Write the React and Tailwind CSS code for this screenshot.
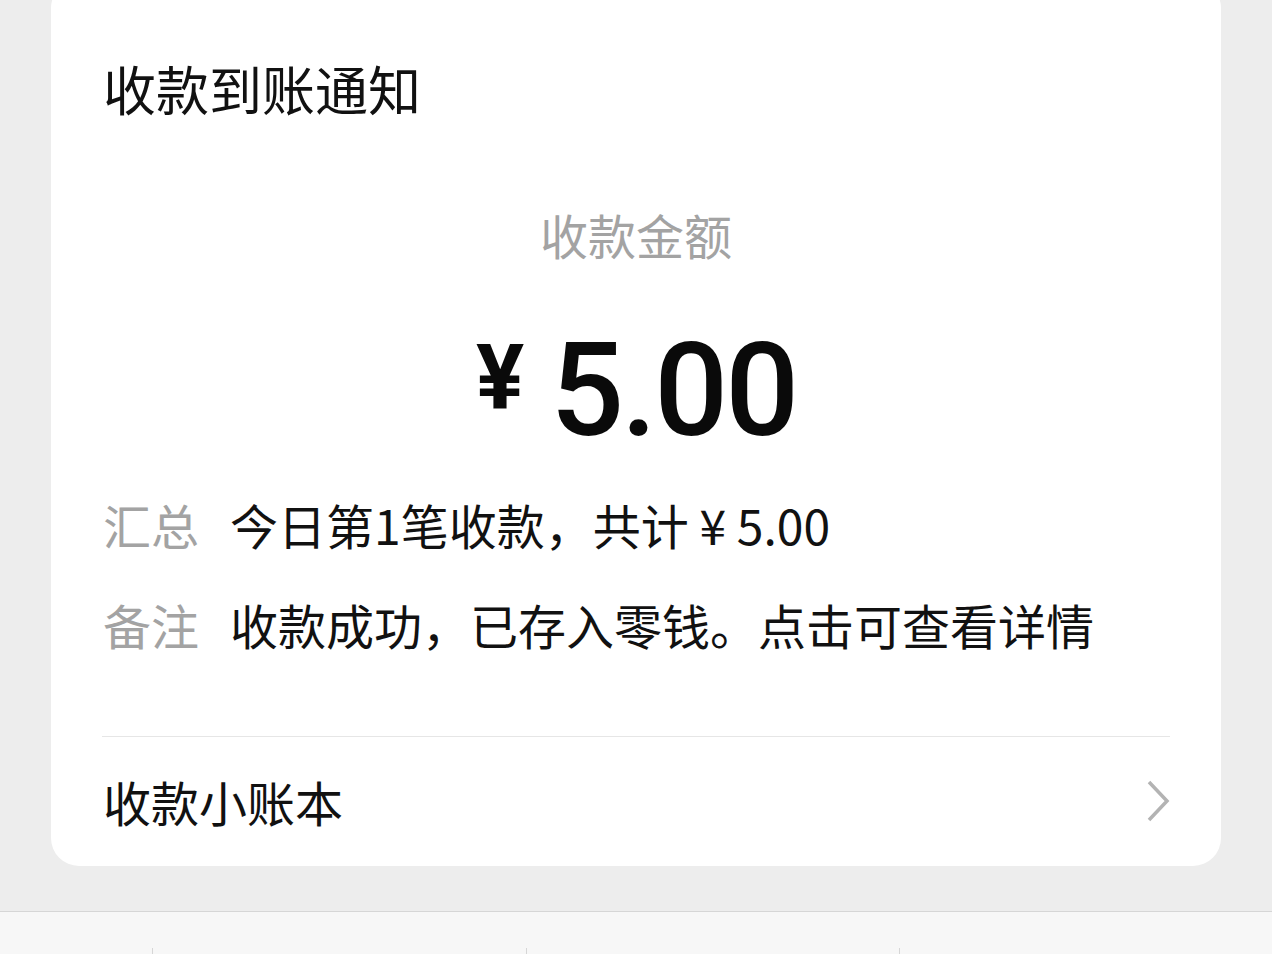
export default function App() {
  const cjk = { fontFamily: '"Noto Sans CJK SC", "Noto Sans", sans-serif' };
  return (
    <div className="w-[1272px] h-[954px] overflow-hidden bg-[#ededed] flex flex-col" style={cjk}>
      <div className="mx-[51px] w-[1170px] -mt-[20px] bg-white rounded-[28px] px-[52px] pt-[82px] pb-[41px] flex flex-col">
        <div className="text-[53px] leading-none text-[#111111]">收款到账通知</div>
        <div className="mt-[95px] text-center text-[48px] leading-none text-[#a3a3a3]">收款金额</div>
        <div className="mt-[68px] flex justify-center items-start text-[#0a0a0a]" style={{ fontFamily: 'Roboto, "Liberation Sans", sans-serif' }}>
          <span className="text-[90px] leading-none font-bold mt-[8px] mr-[26px]">¥</span>
          <span className="text-[130px] leading-none font-medium tracking-[-3px]">5.00</span>
        </div>
        <div className="mt-[44px] flex items-start">
          <span className="w-[127px] shrink-0 text-[48px] leading-none text-[#a3a3a3]">汇总</span>
          <span className="text-[48px] leading-none text-[#111111]">今日第1笔收款，共计 ¥ 5.00</span>
        </div>
        <div className="mt-[52px] flex items-start">
          <span className="w-[127px] shrink-0 text-[48px] leading-none text-[#a3a3a3]">备注</span>
          <span className="text-[48px] leading-none text-[#111111] whitespace-nowrap">收款成功，已存入零钱。点击可查看详情</span>
        </div>
        <div className="mt-[88px] -mx-[1px] h-px bg-[#e6e6e6]"></div>
        <div className="mt-[40px] flex items-center justify-between">
          <span className="text-[48px] leading-none text-[#111111]">收款小账本</span>
          <svg width="26" height="44" viewBox="0 0 26 44" className="mr-[-2px]">
            <path d="M4 3 L22 22 L4 41" fill="none" stroke="#b3b3b3" strokeWidth="3.5" />
          </svg>
        </div>
      </div>
      <div className="mt-[45px] flex-1 bg-[#f7f7f7] border-t border-[#d6d6d6] relative">
        <div className="absolute left-[152px] top-[36px] w-px h-[20px] bg-[#d6d6d6]"></div>
        <div className="absolute left-[526px] top-[36px] w-px h-[20px] bg-[#d6d6d6]"></div>
        <div className="absolute left-[899px] top-[36px] w-px h-[20px] bg-[#d6d6d6]"></div>
      </div>
    </div>
  );
}
